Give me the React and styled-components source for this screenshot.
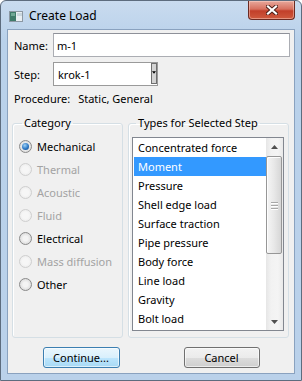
import styled, { createGlobalStyle, css } from "styled-components";

const GlobalStyle = createGlobalStyle`
  html, body {
    margin: 0;
    padding: 0;
    background: #ffffff;
  }
  body {
    font-family: "Noto Sans", "Open Sans", sans-serif;
    font-size: 11px;
    color: #000;
  }
`;

const Window = styled.div`
  width: 302px;
  height: 381px;
  box-sizing: border-box;
  border: 1px solid #5d6c7e;
  border-radius: 6px 6px 0 0;
  background: linear-gradient(#c9dbef, #b9d1ea 40px, #bad1ea);
  display: flex;
  flex-direction: column;
  padding: 0 6px 6px;
`;

const TitleBar = styled.div`
  height: 28px;
  display: flex;
  align-items: flex-start;
`;

const TitleIcon = styled.svg`
  margin: 10px 0 0 2px;
  flex: none;
`;

const TitleText = styled.span`
  margin: 6px 0 0 6px;
  font-size: 12px;
  line-height: 18px;
  color: #000;
`;

const CloseButton = styled.div`
  margin-left: auto;
  width: 47px;
  height: 19px;
  box-sizing: border-box;
  border: 1px solid #6b2a22;
  border-top: none;
  border-radius: 0 0 4px 4px;
  background: linear-gradient(#e8a89c, #d7705f 45%, #c23f2a 55%, #cf5a3e);
  box-shadow: inset 0 0 0 1px rgba(255, 220, 210, 0.45);
  display: flex;
  align-items: center;
  justify-content: center;
`;

const Client = styled.div`
  flex: 1;
  border: 1px solid #8aa2bf;
  background: #f0f0f0;
  display: flex;
  flex-direction: column;
  min-height: 0;
`;

const FormRow = styled.div`
  display: flex;
  align-items: center;
  padding: 0 4px 0 6px;
  margin-top: ${(p) => p.$top}px;
`;

const Label = styled.span`
  width: 39px;
  flex: none;
`;

const TextInput = styled.input`
  flex: 1;
  min-width: 0;
  height: 24px;
  box-sizing: border-box;
  margin: 0;
  border: 1px solid #abadb3;
  border-top-color: #8e9199;
  background: #fff;
  padding: 0 3px;
  font: inherit;
  color: #000;
  outline: none;
`;

const Combo = styled.div`
  width: 105px;
  height: 24px;
  box-sizing: border-box;
  border: 1px solid #9a9a9a;
  background: #fff;
  display: flex;
  align-items: center;
`;

const ComboText = styled.span`
  flex: 1;
  padding-left: 4px;
`;

const DropButton = styled.span`
  align-self: stretch;
  width: 6px;
  border: 1px solid #6f6f6f;
  margin: 0 0 1px;
  background: #d4d4d4;
  display: flex;
  justify-content: center;
  padding-top: 7px;
  box-sizing: border-box;
`;

const ProcText = styled.div`
  padding-left: 6px;
  margin-top: 5px;
  line-height: 16px;
  display: flex;
`;

const ProcValue = styled.span`
  margin-left: 8px;
`;

const GroupRow = styled.div`
  display: flex;
  gap: 5px;
  padding: 0 5px 0 4px;
  margin-top: 8px;
`;

const Group = styled.fieldset`
  margin: 0;
  padding: 0;
  border: 1px solid #d5dfe5;
  border-radius: 3px;
  box-shadow: inset 1px 1px 0 #fff;
  ${(p) =>
    p.$width
      ? css`
          width: ${p.$width}px;
          flex: none;
        `
      : css`
          flex: 1;
        `}
  box-sizing: border-box;
  min-width: 0;
`;

const Legend = styled.legend`
  margin-left: ${(p) => p.$indent}px;
  padding: 0 2px;
  line-height: 16px;
`;

const RadioList = styled.div`
  padding: 4px 0 0 6px;
  display: flex;
  flex-direction: column;
`;

const RadioRow = styled.div`
  height: 23px;
  display: flex;
  align-items: center;
  gap: 5px;
  color: ${(p) => (p.$disabled ? "#a3a3a3" : "#000")};
`;

const RadioCircle = styled.span`
  width: 13px;
  height: 13px;
  box-sizing: border-box;
  border-radius: 50%;
  flex: none;
  display: flex;
  align-items: center;
  justify-content: center;
  border: 1px solid ${(p) => (p.$disabled ? "#cfcfcf" : "#8a8a8a")};
  background: ${(p) =>
    p.$disabled
      ? "radial-gradient(circle at 50% 50%, #f6f6f6 40%, #e6e6e6)"
      : "radial-gradient(circle at 50% 50%, #f4f4f4 30%, #cfcfcf)"};
  ${(p) =>
    p.$checked &&
    css`
      &::after {
        content: "";
        width: 7px;
        height: 7px;
        border-radius: 50%;
        background: radial-gradient(circle at 40% 35%, #9fd2f7, #2d78c4 55%, #0f3f7d);
      }
    `}
`;

const ListBox = styled.div`
  margin: 6px 4px 6px 3px;
  height: 194px;
  box-sizing: border-box;
  border: 1px solid #828790;
  background: #fff;
  display: flex;
  padding-left: 1px;
`;

const Items = styled.div`
  flex: 1;
  display: flex;
  flex-direction: column;
`;

const Item = styled.div`
  height: 19px;
  line-height: 19px;
  padding-left: 4px;
  white-space: nowrap;
  background: ${(p) => (p.$selected ? "#3399ff" : "transparent")};
  color: ${(p) => (p.$selected ? "#fff" : "#000")};
`;

const Scrollbar = styled.div`
  width: 17px;
  flex: none;
  background: linear-gradient(90deg, #e6e6e6, #f2f2f2 30%, #f4f4f4 70%, #e9e9e9);
  display: flex;
  flex-direction: column;
`;

const ArrowButton = styled.div`
  height: 17px;
  display: flex;
  align-items: center;
  justify-content: center;
`;

const Thumb = styled.div`
  margin: 1px 1px 0 0;
  height: 98px;
  box-sizing: border-box;
  border: 1px solid #979797;
  border-radius: 2px;
  background: linear-gradient(90deg, #f5f5f5, #e8e8e8 50%, #d6d6d6);
  box-shadow: inset 1px 1px 0 #fdfdfd;
  display: flex;
  flex-direction: column;
  align-items: center;
  justify-content: center;
  gap: 2px;
`;

const Grip = styled.span`
  width: 7px;
  height: 1px;
  background: #a8a8a8;
  box-shadow: 0 1px 0 #fff;
`;

const Spacer = styled.div`
  flex: 1;
`;

const ButtonRow = styled.div`
  display: flex;
  justify-content: center;
  gap: 64px;
  margin-top: 9px;
`;

const Button = styled.button`
  width: ${(p) => p.$width}px;
  height: 21px;
  box-sizing: border-box;
  margin: 0;
  padding: 0;
  border-radius: 3px;
  font: inherit;
  color: #000;
  border: 1px solid ${(p) => (p.$default ? "#3c7fb1" : "#707070")};
  background: ${(p) =>
    p.$default
      ? "linear-gradient(#eaf6fd, #d9f0fc 50%, #bee6fd 50%, #a7d9f5)"
      : "linear-gradient(#f2f2f2, #ebebeb 50%, #dddddd 50%, #cfcfcf)"};
  box-shadow: inset 0 0 0 1px rgba(255, 255, 255, 0.6);
`;

const categories = [
  { name: "Mechanical", checked: true },
  { name: "Thermal", disabled: true },
  { name: "Acoustic", disabled: true },
  { name: "Fluid", disabled: true },
  { name: "Electrical" },
  { name: "Mass diffusion", disabled: true },
  { name: "Other" },
];

const types = [
  "Concentrated force",
  "Moment",
  "Pressure",
  "Shell edge load",
  "Surface traction",
  "Pipe pressure",
  "Body force",
  "Line load",
  "Gravity",
  "Bolt load",
];

const App = () => {
  return (
    <>
      <GlobalStyle />
      <Window>
        <TitleBar>
          <TitleIcon width="14" height="11" viewBox="0 0 14 11">
            <rect x="0.5" y="0.5" width="13" height="10" fill="#e8eef2" stroke="#8c98a4" />
            <rect x="1" y="1" width="6" height="9" fill="#3e7a6a" />
            <rect x="2" y="2" width="4" height="3" fill="#6fa795" />
            <rect x="8" y="2" width="5" height="3" fill="#c9d6de" />
          </TitleIcon>
          <TitleText>Create Load</TitleText>
          <CloseButton>
            <svg width="12" height="10" viewBox="0 0 12 10">
              <path
                d="M2 1.5 L10 8.5 M10 1.5 L2 8.5"
                stroke="#4a1d16"
                strokeWidth="4"
                strokeLinecap="square"
              />
              <path
                d="M2 1.5 L10 8.5 M10 1.5 L2 8.5"
                stroke="#ffffff"
                strokeWidth="2.2"
                strokeLinecap="square"
              />
            </svg>
          </CloseButton>
        </TitleBar>
        <Client>
          <FormRow $top={3}>
            <Label>Name:</Label>
            <TextInput defaultValue="m-1" readOnly />
          </FormRow>
          <FormRow $top={5}>
            <Label>Step:</Label>
            <Combo>
              <ComboText>krok-1</ComboText>
              <DropButton>
                <svg width="5" height="3" viewBox="0 0 5 3">
                  <path d="M0 0 H5 L2.5 3 Z" fill="#000" />
                </svg>
              </DropButton>
            </Combo>
          </FormRow>
          <ProcText>
            <span>Procedure:</span>
            <ProcValue>Static, General</ProcValue>
          </ProcText>
          <GroupRow>
            <Group $width={111}>
              <Legend $indent={9}>Category</Legend>
              <RadioList>
                {categories.map((c) => (
                  <RadioRow key={c.name} $disabled={c.disabled}>
                    <RadioCircle $checked={c.checked} $disabled={c.disabled} />
                    {c.name}
                  </RadioRow>
                ))}
              </RadioList>
            </Group>
            <Group>
              <Legend $indent={7}>Types for Selected Step</Legend>
              <ListBox>
                <Items>
                  {types.map((t) => (
                    <Item key={t} $selected={t === "Moment"}>
                      {t}
                    </Item>
                  ))}
                </Items>
                <Scrollbar>
                  <ArrowButton>
                    <svg width="7" height="4" viewBox="0 0 7 4">
                      <path d="M0 4 L3.5 0 L7 4 Z" fill="#4f4f4f" />
                    </svg>
                  </ArrowButton>
                  <Thumb>
                    <Grip />
                    <Grip />
                    <Grip />
                  </Thumb>
                  <Spacer />
                  <ArrowButton>
                    <svg width="7" height="4" viewBox="0 0 7 4">
                      <path d="M0 0 L7 0 L3.5 4 Z" fill="#4f4f4f" />
                    </svg>
                  </ArrowButton>
                </Scrollbar>
              </ListBox>
            </Group>
          </GroupRow>
          <ButtonRow>
            <Button $default $width={77}>
              Continue...
            </Button>
            <Button $width={76}>Cancel</Button>
          </ButtonRow>
        </Client>
      </Window>
    </>
  );
};

export default App;
